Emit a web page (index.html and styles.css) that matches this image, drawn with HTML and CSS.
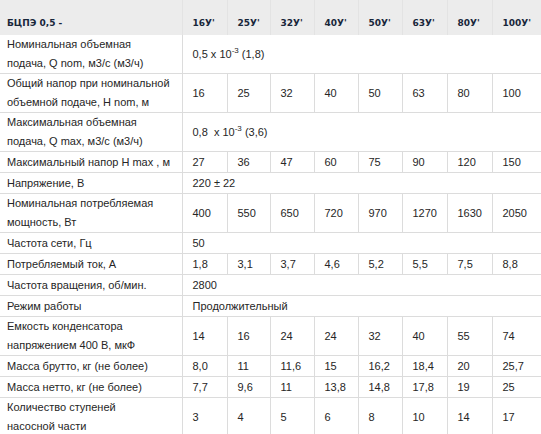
FILE: index.html
```html
<!DOCTYPE html>
<html lang="ru">
<head>
<meta charset="utf-8">
<title>БЦПЭ 0,5</title>
<link rel="stylesheet" href="styles.css">
</head>
<body>
<table class="spec">
  <colgroup>
    <col class="c-name">
    <col class="c45"><col class="c43"><col class="c44"><col class="c44"><col class="c44"><col class="c45"><col class="c45"><col class="c-last">
  </colgroup>
  <thead>
    <tr>
      <th>БЦПЭ 0,5 -</th>
      <th>16У'</th><th>25У'</th><th>32У'</th><th>40У'</th><th>50У'</th><th>63У'</th><th>80У'</th><th>100У'</th>
    </tr>
  </thead>
  <tbody>
    <tr class="dbl">
      <td>Номинальная объемная<br>подача, Q nom, м3/с (м3/ч)</td>
      <td colspan="8">0,5 x 10<sup>-3</sup> (1,8)</td>
    </tr>
    <tr class="dbl">
      <td>Общий напор при номинальной<br>объемной подаче, H nom, м</td>
      <td>16</td><td>25</td><td>32</td><td>40</td><td>50</td><td>63</td><td>80</td><td>100</td>
    </tr>
    <tr class="dbl">
      <td>Максимальная объемная<br>подача, Q max, м3/с (м3/ч)</td>
      <td colspan="8">0,8&nbsp; x 10<sup>-3</sup> (3,6)</td>
    </tr>
    <tr class="sgl">
      <td>Максимальный напор H max , м</td>
      <td>27</td><td>36</td><td>47</td><td>60</td><td>75</td><td>90</td><td>120</td><td>150</td>
    </tr>
    <tr class="sgl">
      <td>Напряжение, В</td>
      <td colspan="8">220 ± 22</td>
    </tr>
    <tr class="dbl">
      <td>Номинальная потребляемая<br>мощность, Вт</td>
      <td>400</td><td>550</td><td>650</td><td>720</td><td>970</td><td>1270</td><td>1630</td><td>2050</td>
    </tr>
    <tr class="sgl">
      <td>Частота сети, Гц</td>
      <td colspan="8">50</td>
    </tr>
    <tr class="sgl">
      <td>Потребляемый ток, А</td>
      <td>1,8</td><td>3,1</td><td>3,7</td><td>4,6</td><td>5,2</td><td>5,5</td><td>7,5</td><td>8,8</td>
    </tr>
    <tr class="sgl">
      <td>Частота вращения, об/мин.</td>
      <td colspan="8">2800</td>
    </tr>
    <tr class="sgl">
      <td>Режим работы</td>
      <td colspan="8">Продолжительный</td>
    </tr>
    <tr class="dbl">
      <td>Емкость конденсатора<br>напряжением 400 В, мкФ</td>
      <td>14</td><td>16</td><td>24</td><td>24</td><td>32</td><td>40</td><td>55</td><td>74</td>
    </tr>
    <tr class="sgl">
      <td>Масса брутто, кг (не более)</td>
      <td>8,0</td><td>11</td><td>11,6</td><td>15</td><td>16,2</td><td>18,4</td><td>20</td><td>25,7</td>
    </tr>
    <tr class="sgl">
      <td>Масса нетто, кг (не более)</td>
      <td>7,7</td><td>9,6</td><td>11</td><td>13,8</td><td>14,8</td><td>17,8</td><td>19</td><td>25</td>
    </tr>
    <tr class="dbl">
      <td>Количество ступеней<br>насосной части</td>
      <td>3</td><td>4</td><td>5</td><td>6</td><td>8</td><td>10</td><td>14</td><td>17</td>
    </tr>
  </tbody>
</table>
</body>
</html>
```

FILE: styles.css
```css
html, body {
  margin: 0;
  padding: 0;
  background: #ffffff;
  overflow: hidden;
}

.spec {
  border-collapse: collapse;
  table-layout: fixed;
  width: 551px;
  font-family: "Liberation Sans", Arial, sans-serif;
  font-size: 11px;
  color: #262626;
}

.c-name { width: 182px; }
.c43 { width: 43px; }
.c44 { width: 44px; }
.c45 { width: 45px; }
.c-last { width: 59px; }

.spec th {
  background: #ececec;
  height: 35px;
  padding: 0 0 7px 10px;
  vertical-align: bottom;
  text-align: left;
  font-family: "DejaVu Sans", Verdana, sans-serif;
  font-size: 9px;
  font-weight: bold;
  color: #18263a;
  border-left: 1px solid #e3e3e3;
  border-bottom: none;
  white-space: nowrap;
  box-sizing: border-box;
}

.spec th:first-child {
  padding-left: 7px;
  border-left: none;
}

.spec td {
  padding: 0 2px 0 10px;
  line-height: 19px;
  text-align: left;
  vertical-align: middle;
  white-space: nowrap;
  border: 1px solid #dcdcdc;
  border-top: none;
}

.spec td:first-child {
  padding-left: 7px;
  border-left: none;
}

.sgl td { height: 20px; }
.dbl td { height: 38px; }

.spec sup {
  font-size: 8px;
  line-height: 0;
  vertical-align: 5px;
}
```
